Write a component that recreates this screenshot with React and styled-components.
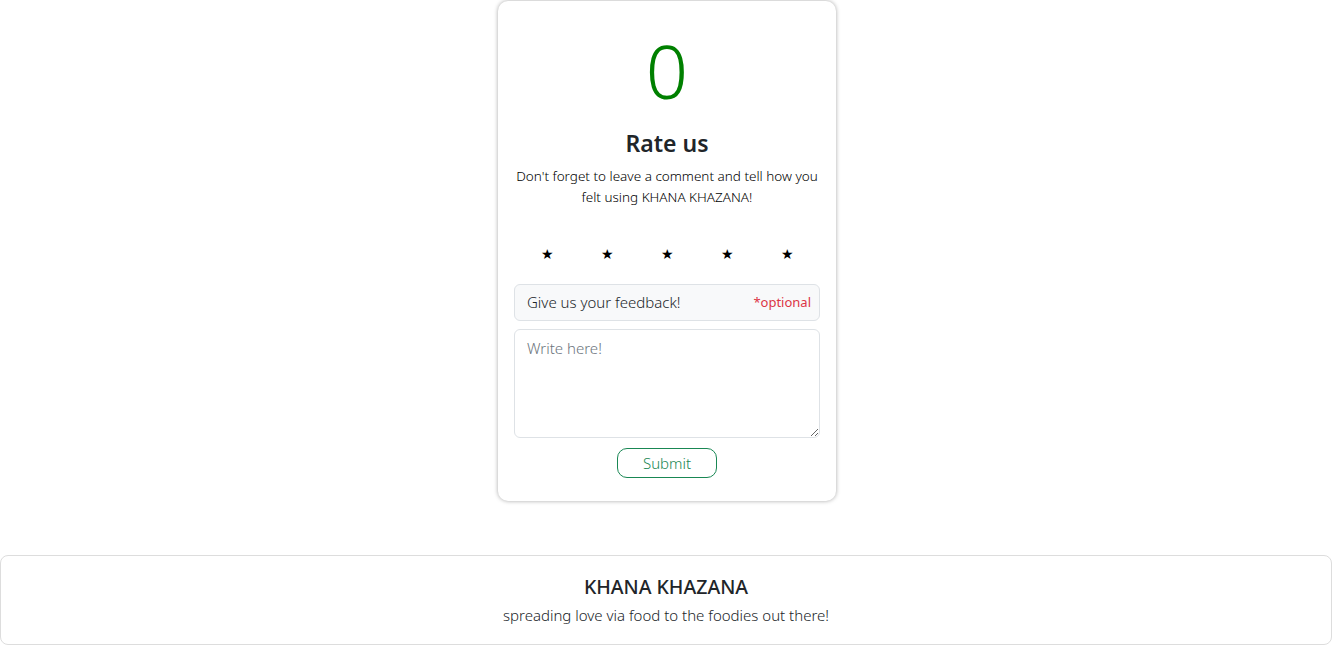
import React, { useState } from 'react';
import styled, { createGlobalStyle } from 'styled-components';

const GlobalStyle = createGlobalStyle`
  body {
    margin: 0;
    background: #fff;
    font-family: "Noto Sans", "Liberation Sans", sans-serif;
    color: #212529;
  }
  * { box-sizing: border-box; }
`

const Page = styled.div`
  display: flex;
  flex-direction: column;
  align-items: center;
  padding-top: 1px;
`

const Card = styled.div`
  width: 338px;
  height: 500px;
  border-radius: 10px;
  box-shadow: 0 0 4px rgba(0, 0, 0, 0.35);
  padding: 16px;
  display: flex;
  flex-direction: column;
  align-items: center;
`

const Score = styled.div`
  color: green;
  font-size: 74px;
  font-weight: 300;
  line-height: 1;
  margin-top: 17px;
`

const Title = styled.h2`
  margin: 22px 0 0;
  font-size: 23px;
  font-weight: 600;
  line-height: 1.2;
`

const Lead = styled.p`
  margin: 8px 0 0;
  font-size: 13.5px;
  font-weight: 300;
  line-height: 21px;
  text-align: center;
  color: #000;
`

const Stars = styled.div`
  display: flex;
  justify-content: center;
  gap: 48px;
  margin-top: 36px;
`

const Star = styled.span`
  width: 12px;
  font-size: 14px;
  line-height: 20px;
  color: #000;
  text-align: center;
  cursor: pointer;
`

const InputGroup = styled.div`
  width: 100%;
  height: 37px;
  margin-top: 20px;
  display: flex;
  align-items: center;
  justify-content: space-between;
  padding: 0 8px 0 12px;
  background: #f8f9fa;
  border: 1px solid #dee2e6;
  border-radius: 6px;
  font-size: 15px;
  font-weight: 300;
`

const Optional = styled.span`
  color: #dc3545;
  font-size: 13px;
  font-weight: 400;
`

const TextArea = styled.textarea`
  width: 100%;
  height: 109px;
  margin-top: 8px;
  padding: 8px 12px;
  border: 1px solid #dee2e6;
  border-radius: 6px;
  font-family: inherit;
  font-size: 15px;
  font-weight: 300;
  resize: vertical;
  &::placeholder { color: #6c757d; }
`

const SubmitButton = styled.button`
  width: 100px;
  height: 30px;
  margin-top: 10px;
  background: #fff;
  border: 1px solid #198754;
  border-radius: 10px;
  color: #198754;
  font-family: inherit;
  font-size: 15px;
  font-weight: 300;
  cursor: pointer;
`

const Footer = styled.footer`
  align-self: stretch;
  margin: 54px 2px 0 0;
  height: 90px;
  border: 1px solid #ddd;
  border-radius: 8px;
  display: flex;
  flex-direction: column;
  align-items: center;
  justify-content: center;
`

const Brand = styled.div`
  font-size: 19.5px;
  font-weight: 500;
  line-height: 24px;
`

const Tagline = styled.div`
  margin-top: 6px;
  font-size: 15px;
  font-weight: 300;
  line-height: 20px;
`

export default function App() {
  const [rating, setRating] = useState(0);
  return (
    <>
      <GlobalStyle />
      <Page>
        <Card>
          <Score>{rating}</Score>
          <Title>Rate us</Title>
          <Lead>Don't forget to leave a comment and tell how you felt using KHANA KHAZANA!</Lead>
          <Stars>
            {[1, 2, 3, 4, 5].map((n) => (
              <Star key={n} onClick={() => setRating(n)}>★</Star>
            ))}
          </Stars>
          <InputGroup>
            <span>Give us your feedback!</span>
            <Optional>*optional</Optional>
          </InputGroup>
          <TextArea placeholder="Write here!" />
          <SubmitButton>Submit</SubmitButton>
        </Card>
        <Footer>
          <Brand>KHANA KHAZANA</Brand>
          <Tagline>spreading love via food to the foodies out there!</Tagline>
        </Footer>
      </Page>
    </>
  );
}
